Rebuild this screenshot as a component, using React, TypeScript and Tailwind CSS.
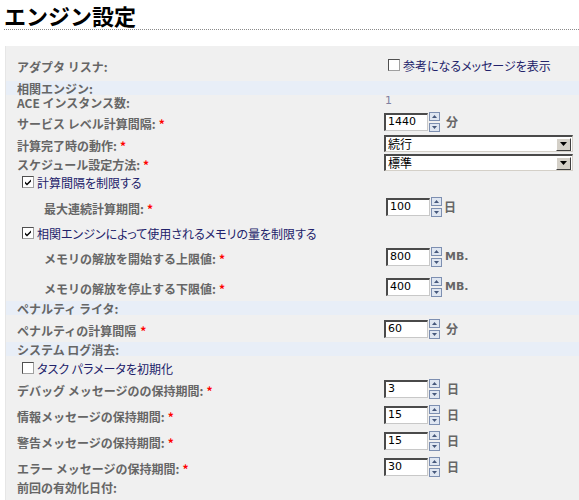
import React from "react";

const LBL = "text-[12px] leading-[13px] font-bold text-[#666666]";

function Req({ space }: { space?: boolean }) {
  return <span className={"text-[#ff0000] font-bold " + (space ? "ml-[4px]" : "ml-[3px]")}>*</span>;
}

function Label({ text, req, space }: { text: string; req?: boolean; space?: boolean }) {
  return (
    <span className={LBL}>
      {text}
      {req && <Req space={space} />}
    </span>
  );
}

function Spin() {
  return (
    <div className="flex flex-col gap-[2px] ml-[1px]">
      <div className="w-[11px] h-[9px] bg-[#dfe6f1] border border-[#7d8fb1] flex items-center justify-center">
        <svg width="5" height="3" viewBox="0 0 5 3"><path d="M0 3 L2.5 0 L5 3 Z" fill="#46587c" /></svg>
      </div>
      <div className="w-[11px] h-[9px] bg-[#dfe6f1] border border-[#7d8fb1] flex items-center justify-center">
        <svg width="5" height="3" viewBox="0 0 5 3"><path d="M0 0 L5 0 L2.5 3 Z" fill="#46587c" /></svg>
      </div>
    </div>
  );
}

function NumInput({ value, unit, unitGap, unitBold }: { value: string; unit: string; unitGap: string; unitBold?: boolean }) {
  return (
    <div className="flex items-center">
      <div className="w-[44px] h-[18px] bg-white border-t-2 border-l-2 border-t-[#4a4a4a] border-l-[#4a4a4a] border-r border-b border-r-[#c8c8c8] border-b-[#c8c8c8] flex items-center pl-[2px] text-[11px] leading-[14px] text-black font-['DejaVu_Sans',sans-serif]">
        {value}
      </div>
      <Spin />
      <span className={unitGap + " leading-[14px] text-[#666666] font-bold " + (unitBold ? "font-['DejaVu_Sans','Noto_Sans_CJK_JP',sans-serif] text-[11px]" : "text-[12px]")}>
        {unit}
      </span>
    </div>
  );
}

function Select({ value }: { value: string }) {
  return (
    <div className="w-[189px] h-[17px] bg-white border-t-2 border-l-2 border-t-[#4a4a4a] border-l-[#4a4a4a] border-r border-b border-r-[#d4d0c8] border-b-[#d4d0c8] flex items-center">
      <span className="flex-1 pl-[2px] text-[12px] leading-[14px] text-black">{value}</span>
      <div className="w-[15px] h-[13px] mr-[1px] bg-[#d4d0c8] border border-t-white border-l-white border-r-[#404040] border-b-[#404040] flex items-center justify-center">
        <svg width="7" height="4" viewBox="0 0 7 4"><path d="M0 0 L7 0 L3.5 4 Z" fill="#000" /></svg>
      </div>
    </div>
  );
}

function Check({ checked, label }: { checked?: boolean; label: string }) {
  return (
    <div className="flex items-center">
      <div className="w-[12px] h-[12px] bg-white border border-t-[#505050] border-l-[#505050] border-r-[#a0a0a0] border-b-[#a0a0a0] flex items-center justify-center">
        {checked && (
          <svg width="8" height="8" viewBox="0 0 8 8">
            <path d="M1 3.5 L3 5.5 L7 1.5 L7 3.5 L3 7.5 L1 5.5 Z" fill="#000" />
          </svg>
        )}
      </div>
      <span className="ml-[3px] text-[12px] leading-[13px] text-[#22226a] [font-feature-settings:'palt']">{label}</span>
    </div>
  );
}

function Band({ text, mt }: { text: string; mt: string }) {
  return (
    <div className={"h-[14px] bg-[#e8eef7] flex items-center pl-[11px] " + mt}>
      <Label text={text} />
    </div>
  );
}

export default function App() {
  return (
    <div className="bg-white min-h-[500px] overflow-hidden font-['Noto_Sans_CJK_JP',sans-serif]">
      <h1 className="h-[29px] leading-[30px] text-[22px] font-bold text-black pl-[4px]">エンジン設定</h1>
      <div className="ml-[4px] border-b border-dotted border-[#8a8a8a]" />
      <div className="ml-[5px] mt-[16px] bg-[#f0f0f0] pt-[11px] pb-[10px] border-l border-[#e6e6e6]">
        <div className="h-[16px] flex items-center pl-[11px]">
          <div className="w-[367px] shrink-0"><Label text="アダプタ リスナ:" /></div>
          <div className="ml-[4px]"><Check label="参考になるメッセージを表示" /></div>
        </div>

        <Band text="相関エンジン:" mt="mt-[8px]" />

        <div className="h-[12px] flex items-center pl-[11px]">
          <div className="w-[367px] shrink-0"><Label text="ACE インスタンス数:" /></div>
          <span className="ml-[1px] text-[11px] leading-[12px] text-[#8080a0] font-['DejaVu_Sans',sans-serif]">1</span>
        </div>

        <div className="h-[19px] mt-[5px] flex items-center pl-[11px]">
          <div className="w-[367px] shrink-0"><Label text="サービス レベル計算間隔:" req /></div>
          <NumInput value="1440" unit="分" unitGap="ml-[6px]" />
        </div>

        <div className="h-[17px] mt-[4px] flex items-center pl-[11px]">
          <div className="w-[367px] shrink-0"><Label text="計算完了時の動作:" req /></div>
          <Select value="続行" />
        </div>

        <div className="h-[17px] mt-[2px] flex items-center pl-[11px]">
          <div className="w-[367px] shrink-0"><Label text="スケジュール設定方法:" req /></div>
          <Select value="標準" />
        </div>

        <div className="h-[12px] mt-[5px] flex items-center pl-[16px]">
          <Check checked label="計算間隔を制限する" />
        </div>

        <div className="h-[19px] mt-[9px] flex items-center pl-[38px]">
          <div className="w-[342px] shrink-0"><Label text="最大連続計算期間:" req /></div>
          <NumInput value="100" unit="日" unitGap="ml-[2px]" />
        </div>

        <div className="h-[12px] mt-[11px] flex items-center pl-[16px]">
          <Check checked label="相関エンジンによって使用されるメモリの量を制限する" />
        </div>

        <div className="h-[19px] mt-[8px] flex items-center pl-[38px]">
          <div className="w-[342px] shrink-0"><Label text="メモリの解放を開始する上限値:" req /></div>
          <NumInput value="800" unit="MB." unitGap="ml-[3px]" unitBold />
        </div>

        <div className="h-[19px] mt-[11px] flex items-center pl-[38px]">
          <div className="w-[342px] shrink-0"><Label text="メモリの解放を停止する下限値:" req /></div>
          <NumInput value="400" unit="MB." unitGap="ml-[3px]" unitBold />
        </div>

        <Band text="ペナルティ ライタ:" mt="mt-[5px]" />

        <div className="h-[19px] mt-[4px] flex items-center pl-[11px]">
          <div className="w-[367px] shrink-0 pt-[1px]"><Label text="ペナルティの計算間隔" req space /></div>
          <NumInput value="60" unit="分" unitGap="ml-[6px]" />
        </div>

        <Band text="システム ログ消去:" mt="mt-[4px]" />

        <div className="h-[12px] mt-[6px] flex items-center pl-[16px]">
          <Check label="タスク パラメータを初期化" />
        </div>

        <div className="h-[19px] mt-[5px] flex items-center pl-[11px]">
          <div className="w-[367px] shrink-0"><Label text="デバッグ メッセージのの保持期間:" req /></div>
          <NumInput value="3" unit="日" unitGap="ml-[7px]" />
        </div>

        <div className="h-[19px] mt-[7px] flex items-center pl-[11px]">
          <div className="w-[367px] shrink-0"><Label text="情報メッセージの保持期間:" req /></div>
          <NumInput value="15" unit="日" unitGap="ml-[7px]" />
        </div>

        <div className="h-[19px] mt-[7px] flex items-center pl-[11px]">
          <div className="w-[367px] shrink-0"><Label text="警告メッセージの保持期間:" req /></div>
          <NumInput value="15" unit="日" unitGap="ml-[7px]" />
        </div>

        <div className="h-[19px] mt-[7px] flex items-center pl-[11px]">
          <div className="w-[367px] shrink-0"><Label text="エラー メッセージの保持期間:" req /></div>
          <NumInput value="30" unit="日" unitGap="ml-[7px]" />
        </div>

        <div className="h-[13px] mt-[5px] flex items-center pl-[11px]">
          <Label text="前回の有効化日付:" />
        </div>
      </div>
    </div>
  );
}
